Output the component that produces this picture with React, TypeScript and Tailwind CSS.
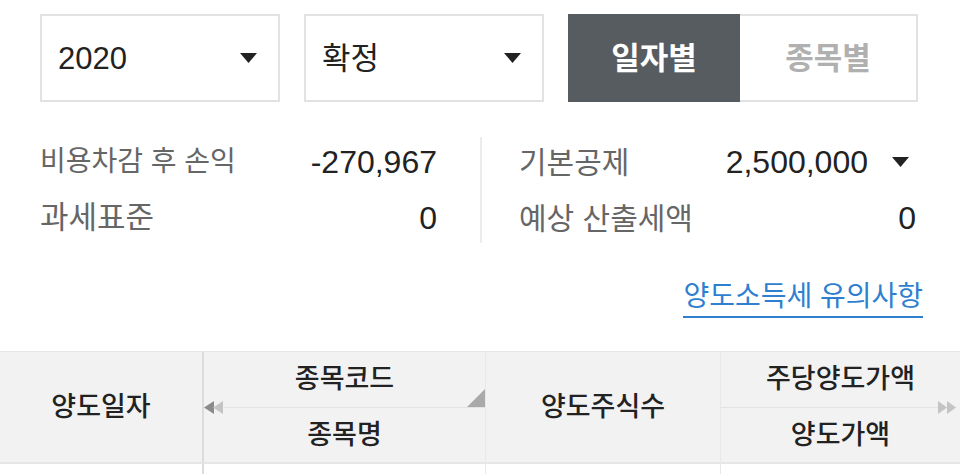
import React from "react";

const FONT = { fontFamily: '"Liberation Sans", "Noto Sans CJK KR", sans-serif' };

function Caret({ className = "" }: { className?: string }) {
  return (
    <svg width="17" height="10" viewBox="0 0 17 10" className={className}>
      <polygon points="0,0 17,0 8.5,10" fill="#222" />
    </svg>
  );
}

function Select({ label }: { label: string }) {
  return (
    <div className="w-[240px] h-[88px] border-2 border-[#e2e2e2] bg-white flex items-center justify-between pl-[16px] pr-[21px]">
      <span className="text-[31px] text-[#222] leading-none">{label}</span>
      <Caret />
    </div>
  );
}

function DoubleLeft() {
  return (
    <svg width="20" height="13" viewBox="0 0 20 13">
      <polygon points="0,6.5 10,0 10,13" fill="#8a8a8a" />
      <polygon points="9,6.5 19,0 19,13" fill="#c4c4c4" />
    </svg>
  );
}

function DoubleRight() {
  return (
    <svg width="20" height="13" viewBox="0 0 20 13">
      <polygon points="0,0 9,6.5 0,13" fill="#c4c4c4" />
      <polygon points="9,0 18,6.5 9,13" fill="#c4c4c4" />
    </svg>
  );
}

export default function App() {
  return (
    <div className="w-[960px] h-[474px] overflow-hidden bg-white" style={FONT}>
      {/* Top controls */}
      <div className="flex pt-[14px] pl-[40px] gap-[24px]">
        <Select label="2020" />
        <Select label="확정" />
        <div className="flex h-[88px]">
          <div className="w-[172px] h-full bg-[#575c60] flex items-center justify-center">
            <span className="text-[31px] font-bold text-white leading-none">일자별</span>
          </div>
          <div className="w-[178px] h-full border-2 border-l-0 border-[#e2e2e2] bg-white flex items-center justify-center">
            <span className="text-[31px] font-bold text-[#b0b0b0] leading-none">종목별</span>
          </div>
        </div>
      </div>

      {/* Summary */}
      <div className="flex pl-[40px] mt-[32px]">
        <div className="w-[397px] flex flex-col">
          <div className="h-[56px] flex items-center justify-between">
            <span className="text-[28px] text-[#666]">비용차감 후 손익</span>
            <span className="text-[32px] text-[#222]">-270,967</span>
          </div>
          <div className="h-[56px] flex items-center justify-between">
            <span className="text-[31px] text-[#666]">과세표준</span>
            <span className="text-[32px] text-[#222]">0</span>
          </div>
        </div>
        <div className="ml-[43px] my-[3px] w-[2px] bg-[#ececec]" />
        <div className="ml-[37px] w-[397px] flex flex-col">
          <div className="h-[56px] flex items-center justify-between">
            <span className="text-[30px] text-[#666]">기본공제</span>
            <div className="flex items-center">
              <span className="text-[32px] text-[#222]">2,500,000</span>
              <Caret className="ml-[24px] mr-[7px]" />
            </div>
          </div>
          <div className="h-[56px] flex items-center justify-between">
            <span className="text-[30px] text-[#666]">예상 산출세액</span>
            <span className="text-[32px] text-[#222]">0</span>
          </div>
        </div>
      </div>

      {/* Link */}
      <div className="flex justify-end pr-[37px] mt-[36px]">
        <span className="inline-block text-[28px] leading-[30px] pb-[4px] text-[#2f7fd1] border-b-2 border-[#2f7fd1]">
          양도소득세 유의사항
        </span>
      </div>

      {/* Table header */}
      <div className="mt-[33px] flex border-t border-[#e6e6e6] bg-[#f2f2f2] text-[27px] font-medium text-[#222]">
        <div className="w-[204px] h-[112px] flex items-center justify-center border-r-2 border-[#dcdcdc] border-b-2 border-b-[#e6e6e6]">
          양도일자
        </div>
        <div className="relative w-[282px] h-[112px] flex flex-col border-r border-[#e8e8e8] border-b-2 border-b-[#e6e6e6]">
          <div className="relative h-[55px] flex items-center justify-center">
            종목코드
            <svg width="18" height="18" viewBox="0 0 18 18" className="absolute right-0 bottom-0">
              <polygon points="18,0 18,18 0,18" fill="#a9a9a9" />
            </svg>
          </div>
          <div className="ml-[20px] h-px bg-[#e3e3e3]" />
          <div className="h-[54px] flex items-center justify-center">종목명</div>
          <div className="absolute left-0 top-[49px]">
            <DoubleLeft />
          </div>
        </div>
        <div className="w-[235px] h-[112px] flex items-center justify-center border-r border-[#e8e8e8] border-b-2 border-b-[#e6e6e6]">
          양도주식수
        </div>
        <div className="relative flex-1 h-[112px] flex flex-col border-b-2 border-b-[#e6e6e6]">
          <div className="h-[55px] flex items-center justify-center">주당양도가액</div>
          <div className="mr-[20px] h-px bg-[#e3e3e3]" />
          <div className="h-[54px] flex items-center justify-center">양도가액</div>
          <div className="absolute right-[2px] top-[49px]">
            <DoubleRight />
          </div>
        </div>
      </div>

      {/* Table body start */}
      <div className="flex h-[20px] bg-white">
        <div className="w-[204px] border-r-2 border-[#dcdcdc]" />
        <div className="w-[282px] border-r border-[#e8e8e8]" />
        <div className="w-[235px] border-r border-[#e8e8e8]" />
        <div className="flex-1" />
      </div>
    </div>
  );
}
